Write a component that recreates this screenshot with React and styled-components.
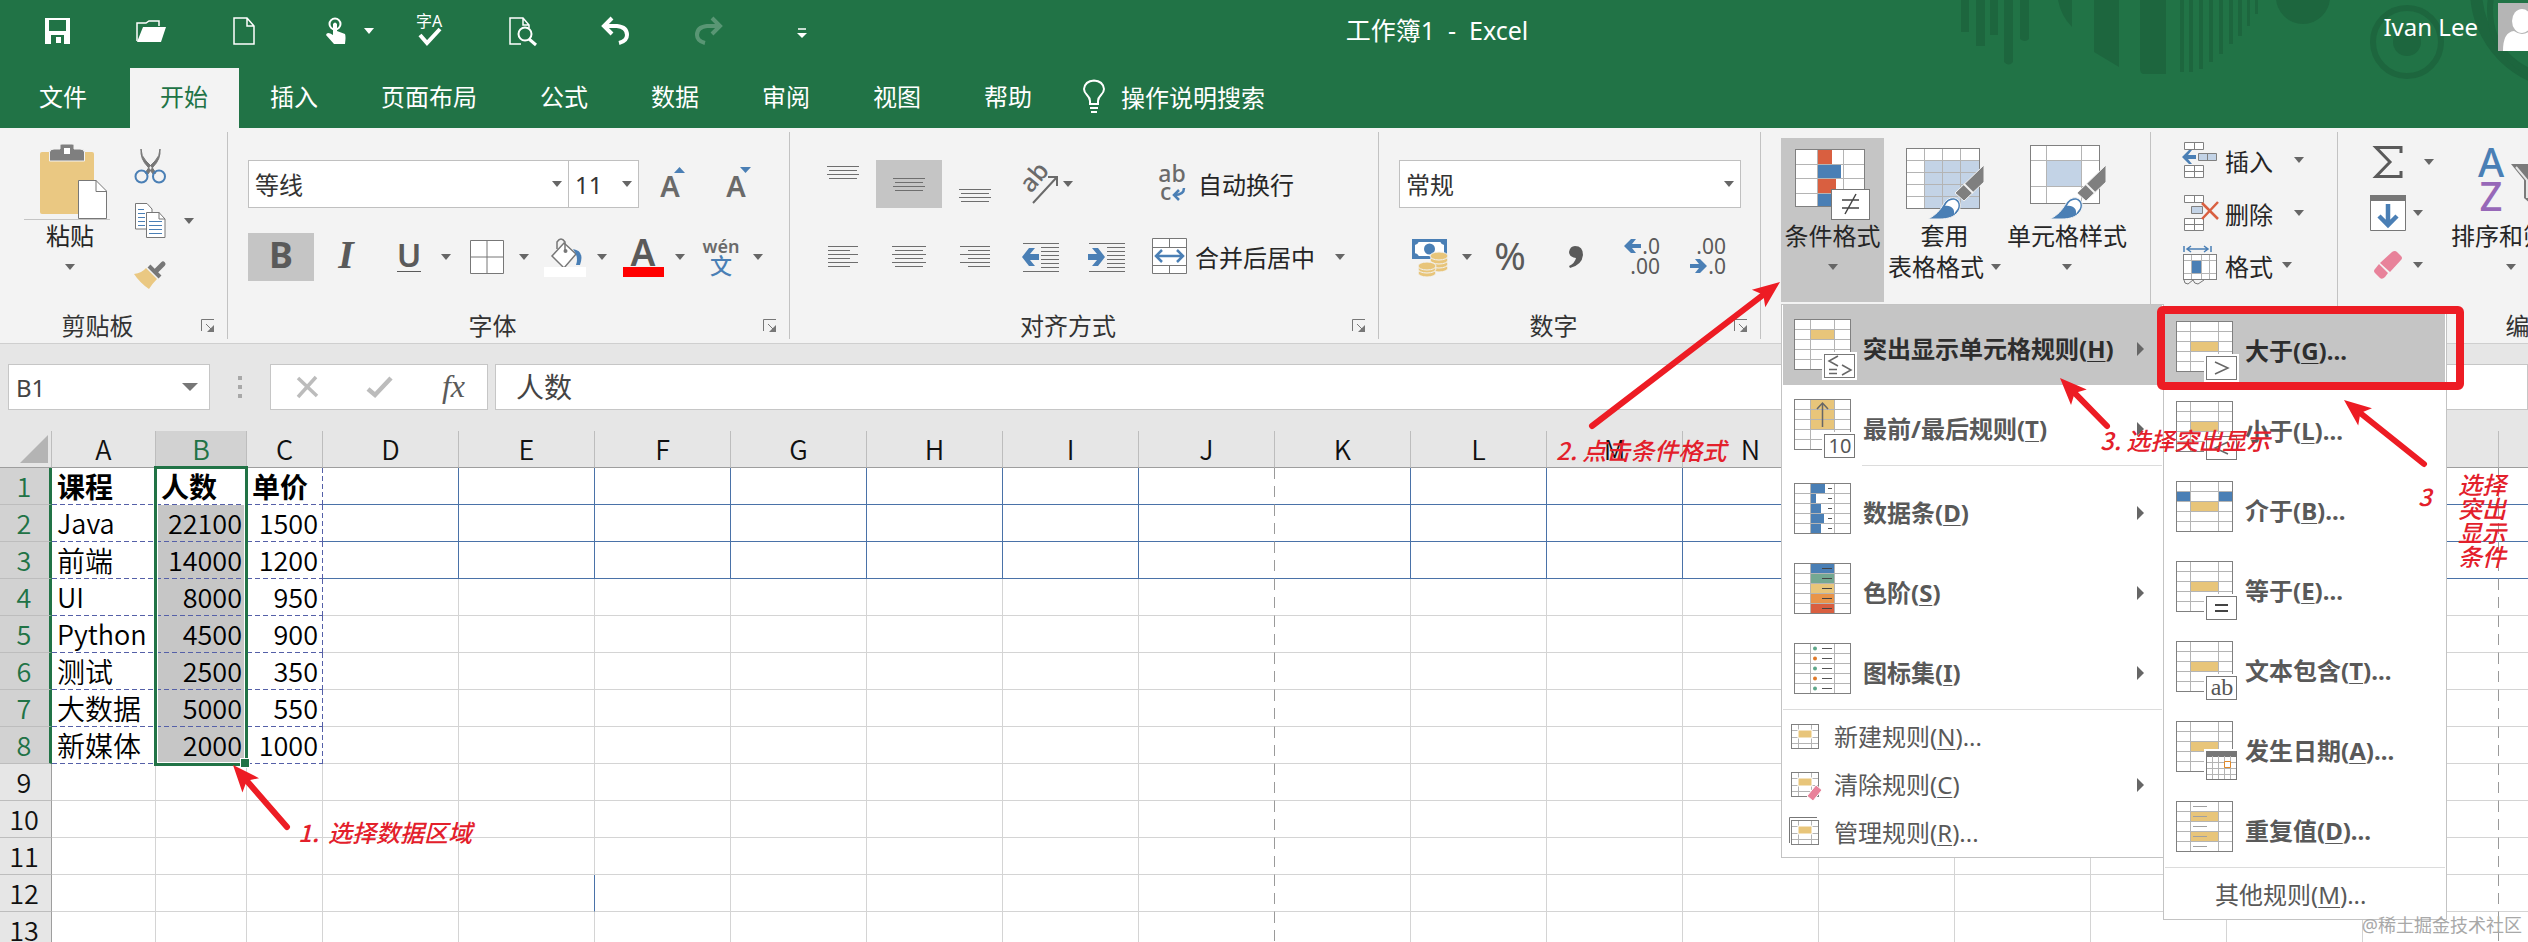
import React from "react";
import styled, { createGlobalStyle, css } from "styled-components";

const UI = `"Noto Sans", "Noto Sans CJK SC", sans-serif`;
const CELL = `"Noto Sans CJK SC", "Noto Sans", sans-serif`;
const GREEN = "#217346";
const RED = "#ed1c24";
const BLUE = "#4a7fb5";
const TAN = "#e8c57a";
const HOVER = "#c5c5c5";

const GlobalStyle = createGlobalStyle`
  * { box-sizing: border-box; }
  body { margin: 0; font-family: ${UI}; font-size: 24px; color: #333; background: #fff; }
  button, input, select { font: inherit; color: inherit; border: 0; background: none; padding: 0; margin: 0; outline: none; }
  svg { display: block; flex: none; overflow: visible; }
  ul { list-style: none; margin: 0; padding: 0; }
`;

const Page = styled.div`
  position: relative;
  height: 100vh;
  overflow: hidden;
  display: flex;
  flex-direction: column;
`;

/* ---------- title bar and tabs ---------- */
const Header = styled.header`
  position: relative;
  flex: none;
  background: ${GREEN};
  color: #fff;
`;
const Decor = styled.svg`
  position: absolute;
  top: 0;
  right: 0;
`;
const TitleRow = styled.div`
  position: relative;
  display: flex;
  align-items: center;
  height: 68px;
  padding-bottom: 6px;
`;
const QuickBar = styled.div`
  display: flex;
  padding-left: 11px;
`;
const QuickButton = styled.button`
  width: 93px;
  height: 48px;
  display: flex;
  align-items: center;
  justify-content: ${(p) => (p.$split ? "flex-start" : "center")};
  gap: 18px;
  padding-left: ${(p) => (p.$split ? "36px" : "0")};
  opacity: ${(p) => (p.$dim ? 0.25 : 1)};
`;
const Title = styled.h1`
  flex: 1;
  margin: 0;
  padding-bottom: 4px;
  text-align: center;
  font-size: 25px;
  font-weight: 400;
  white-space: pre;
`;
const Account = styled.div`
  width: 502px;
  height: 62px;
  display: flex;
  justify-content: flex-end;
  align-items: flex-start;
  gap: 20px;
  padding-top: 3px;
  line-height: 48px;
`;
const Avatar = styled.span`
  width: 30px;
  height: 48px;
  overflow: hidden;
  background: #b5b5b5;
`;
const Tabs = styled.nav`
  position: relative;
  display: flex;
  height: 60px;
`;
const Tab = styled.button`
  padding: ${(p) => (p.$file ? "0 43px 6px 39px" : p.$on ? "0 31px 6px 30px" : "0 32px 6px 31px")};
  background: ${(p) => (p.$on ? "#f3f3f3" : "transparent")};
  color: ${(p) => (p.$on ? GREEN : "#fff")};
  white-space: nowrap;
`;
const TellMe = styled.button`
  display: flex;
  align-items: center;
  gap: 16px;
  padding: 0 0 4px 19px;
  white-space: nowrap;
`;

/* ---------- ribbon ---------- */
const Ribbon = styled.div`
  flex: none;
  display: flex;
  height: 216px;
  padding: 4px 0;
  background: #f3f3f3;
  border-bottom: 1px solid #cfcfcf;
`;
const GroupBox = styled.section`
  flex: none;
  display: flex;
  flex-direction: column;
  justify-content: space-between;
  width: ${(p) => p.$w}px;
  border-right: 1px solid #c2c2c2;
`;
const GroupFoot = styled.div`
  display: flex;
  align-items: center;
  height: 26px;
`;
const GroupName = styled.span`
  flex: 1;
  text-align: center;
  line-height: 26px;
`;
const Launcher = styled.button`
  width: 32px;
  height: 26px;
  display: flex;
  align-items: center;
  padding-left: 6px;
`;
const Tools = styled.div`
  display: flex;
  flex-direction: column;
  gap: 25px;
  padding: 28px 0 0 20px;
`;
const ToolRow = styled.div`
  display: flex;
  height: 48px;
`;
const Tool = styled.button`
  width: ${(p) => p.$w || 66}px;
  height: 48px;
  display: flex;
  align-items: center;
  justify-content: center;
  padding-left: ${(p) => (p.$split ? "4px" : "0")};
  padding-bottom: ${(p) => (p.$lift ? "4px" : "0")};
  background: ${(p) => (p.$on ? HOVER : "transparent")};
`;
const LabelTool = styled.button`
  height: 48px;
  display: flex;
  align-items: center;
  gap: 8px;
  margin-left: ${(p) => p.$before}px;
  padding-bottom: 2px;
  white-space: nowrap;
  color: #262626;
`;
const ToolIcon = styled.span`
  width: ${(p) => p.$w || 36}px;
  display: flex;
  justify-content: center;
`;
const ArrowBox = styled.button`
  width: 20px;
  min-height: 24px;
  display: flex;
  align-items: center;
  justify-content: center;
  margin-left: ${(p) => p.$before || 0}px;
`;
const Glyph = styled.span`
  font-family: ${(p) => (p.$serif ? `"Liberation Serif", serif` : UI)};
  font-size: ${(p) => p.$size}px;
  font-weight: ${(p) => p.$weight || 400};
  font-style: ${(p) => (p.$italic ? "italic" : "normal")};
  line-height: 32px;
  color: #5a5a5a;
  border-bottom: ${(p) => (p.$under ? "1px solid #5a5a5a" : "0")};
`;
const ComboBox = styled.label`
  position: relative;
  display: flex;
  align-items: center;
  width: ${(p) => p.$w}px;
  height: 48px;
  margin-right: ${(p) => (p.$joined ? "-1px" : "0")};
  padding-right: 6px;
  background: #fff;
  border: 1px solid #c0c0c0;
  select {
    appearance: none;
    flex: 1;
    min-width: 0;
    height: 46px;
    padding-left: 6px;
  }
`;
const Columns = styled.div`
  display: flex;
  padding: 6px 0 0 ${(p) => p.$left}px;
`;
const BigButton = styled.button`
  width: ${(p) => p.$w}px;
  height: 164px;
  display: flex;
  flex-direction: column;
  align-items: center;
  padding-top: 6px;
  background: ${(p) => (p.$on ? HOVER : "transparent")};
  color: #262626;
  white-space: nowrap;
`;
const BigArt = styled.span`
  height: 76px;
  display: flex;
  align-items: flex-end;
`;
const BigLine = styled.span`
  height: 31px;
  line-height: 31px;
  display: flex;
  align-items: center;
  gap: 7px;
`;
const Stack = styled.div`
  display: flex;
  flex-direction: column;
  padding-left: ${(p) => p.$left || 0}px;
`;
const StackRow = styled.div`
  display: flex;
  align-items: center;
  height: ${(p) => p.$h}px;
`;
const StackButton = styled.button`
  display: flex;
  align-items: center;
  gap: 4px;
  color: #262626;
  white-space: nowrap;
`;
const MenuAnchor = styled.div`
  position: relative;
`;

/* ---------- drop-down menus ---------- */
const Menu = styled.ul`
  position: absolute;
  z-index: 5;
  top: ${(p) => (p.$sub ? 168 : 166)}px;
  left: ${(p) => (p.$sub ? 382 : 0)}px;
  width: ${(p) => (p.$sub ? 284 : 383)}px;
  padding: 0 1px;
  background: #fff;
  border: 1px solid #c3c3c3;
`;
const MenuItem = styled.button`
  width: 100%;
  height: ${(p) => (p.$small ? 48 : 80)}px;
  display: flex;
  align-items: center;
  gap: ${(p) => (p.$small ? 15 : 7)}px;
  padding: ${(p) => (p.$plain ? "0 18px 0 50px" : p.$small ? "0 18px 0 8px" : "8px 18px 0 11px")};
  background: ${(p) => (p.$on ? HOVER : "#fff")};
  color: ${(p) => (p.$on ? "#2e2e2e" : "#595959")};
  font-weight: ${(p) => (p.$small ? 400 : 700)};
  text-align: left;
  white-space: nowrap;
  u { text-underline-offset: 3px; text-decoration-thickness: 1px; }
`;
const ItemText = styled.span`
  flex: 1;
  padding-bottom: 4px;
`;
const MenuRule = styled.li`
  height: 4px;
  margin-left: ${(p) => p.$left || 0}px;
  border-top: 1px solid #dcdcdc;
`;

/* ---------- formula bar ---------- */
const FormulaBar = styled.div`
  flex: none;
  display: flex;
  height: 87px;
  padding: 20px 0 21px 8px;
  background: #e6e6e6;
`;
const White = css`
  height: 46px;
  background: #fff;
  border: 1px solid #c6c6c6;
  display: flex;
  align-items: center;
`;
const NameBox = styled.label`
  ${White}
  width: 202px;
  padding: 0 11px 0 7px;
  input { flex: 1; min-width: 0; height: 40px; font-size: 24px; color: #444; }
`;
const Dots = styled.span`
  width: 60px;
  height: 46px;
  display: flex;
  align-items: center;
  justify-content: center;
`;
const FormulaTools = styled.div`
  ${White}
  width: 218px;
  justify-content: space-between;
  padding: 0 22px 0 25px;
`;
const FormulaInput = styled.input`
  && {
    ${White}
    flex: 1;
    min-width: 0;
    margin-left: 7px;
    padding: 0 0 2px 20px;
    font-size: 28px;
    color: #444;
  }
`;

/* ---------- sheet ---------- */
const SheetWrap = styled.main`
  position: relative;
  flex: 1;
  min-height: 0;
  overflow: hidden;
`;
const Sheet = styled.table`
  table-layout: fixed;
  border-collapse: separate;
  border-spacing: 0;
  width: 2635px;
  font-family: ${CELL};
  font-weight: 350;
  color: #000;
`;
const ColHead = styled.th`
  height: 37px;
  padding: 0;
  font-size: 27px;
  line-height: 30px;
  font-weight: 350;
  color: ${(p) => (p.$on ? GREEN : "#111")};
  background: ${(p) => (p.$on ? "#d2d2d2" : "#e6e6e6")};
  border-bottom: 1px solid #9e9e9e;
  border-right: 1px solid #bdbdbd;
`;
const RowHead = styled.th`
  height: 37px;
  padding: 0 ${(p) => (p.$on ? 1 : 3)}px 0 0;
  font-size: 27px;
  line-height: 30px;
  font-weight: 350;
  color: ${(p) => (p.$on ? GREEN : "#111")};
  background: ${(p) => (p.$on ? "#d2d2d2" : "#e6e6e6")};
  border-bottom: 1px solid #bdbdbd;
  border-right: ${(p) => (p.$on ? `3px solid ${GREEN}` : "1px solid #9e9e9e")};
`;
const Corner = styled.div`
  display: flex;
  justify-content: flex-end;
  padding-right: 3px;
`;
const dashH = "repeating-linear-gradient(to right, #5560a8 0 5px, transparent 5px 8px)";
const dashV = "repeating-linear-gradient(to bottom, #5560a8 0 5px, transparent 5px 8px)";
const pageV = "repeating-linear-gradient(to bottom, #9a9a9a 0 11px, transparent 11px 18px)";
const Cell = styled.td`
  height: 37px;
  padding: 0 4px 0 5px;
  white-space: nowrap;
  line-height: 36px;
  font-size: ${(p) => (p.$latin ? 27 : 28)}px;
  font-weight: ${(p) => (p.$bold ? 700 : 350)};
  text-align: ${(p) => (p.$num ? "right" : "left")};
  background-color: ${(p) => (p.$sel ? "#c6c6c6" : "transparent")};
  border-right: 1px solid ${(p) => p.$right};
  border-bottom: 1px solid ${(p) => p.$bottom};
  background-origin: border-box;
  background-repeat: no-repeat;
  background-image: ${(p) => [p.$dash && dashH, p.$dashRight && dashV, p.$page && pageV].filter(Boolean).join(",") || "none"};
  background-position: ${(p) => (p.$dash ? "left bottom, right top" : "right top")};
  background-size: ${(p) => (p.$dash ? "100% 1px, 1px 100%" : "1px 100%")};
`;
const Selection = styled.div`
  position: absolute;
  left: 154px;
  top: 35px;
  width: 94px;
  height: 300px;
  border: 3px solid ${GREEN};
  box-shadow: inset 0 0 0 1px #fff;
  pointer-events: none;
  &::after {
    content: "";
    position: absolute;
    right: -4px;
    bottom: -4px;
    width: 8px;
    height: 8px;
    background: ${GREEN};
    outline: 1px solid #fff;
  }
`;

/* ---------- tutorial marks lying over the page ---------- */
const Marks = styled.svg`
  position: absolute;
  z-index: 8;
  top: 0;
  left: 0;
  pointer-events: none;
`;
const Note = styled.p`
  position: absolute;
  z-index: 9;
  left: ${(p) => p.$x}px;
  top: ${(p) => p.$y}px;
  margin: 0;
  font-family: ${CELL};
  font-size: 24px;
  line-height: 24px;
  font-style: italic;
  font-weight: 500;
  color: #e3202b;
  white-space: pre;
`;
const Watermark = styled.footer`
  position: absolute;
  z-index: 9;
  right: 6px;
  bottom: 5px;
  font-size: 18px;
  line-height: 24px;
  color: #a8a8a8;
`;

/* ---------- small drawings ---------- */
const Tri = ({ w = 10, h = 6, c = "#666" }) => (
  <svg width={w} height={h}><path d={`M0 0H${w}L${w / 2} ${h}Z`} fill={c} /></svg>
);
const Arrow = ({ before, label = "更多" }) => (
  <ArrowBox $before={before} aria-label={label}><Tri /></ArrowBox>
);
const Lines = ({ rows, w = 34, h = 26 }) => (
  <svg width={w} height={h} stroke="#6e6e6e" strokeWidth="1">
    {rows.map(([x1, x2, y]) => <path key={y} d={`M${x1} ${y + 0.5}H${x2}`} />)}
  </svg>
);
const three = (y) => [[1, 33, y], [3, 31, y + 4], [1, 33, y + 8], [3, 31, y + 12]];
const LeftArrow = ({ flip, x = 0, y = 0 }) => (
  <path transform={flip ? `translate(${x + 17} ${y}) scale(-1 1)` : `translate(${x} ${y})`}
    d="M0 9L7 0H13L8 6H17V12H8L13 18H7Z" fill={BLUE} />
);
const Indent = ({ flip }) => (
  <svg width="38" height="28">
    <path d="M1 .5H37M19 4.500H37M19 8.500H37M19 12.500H37M19 16.500H37M19 20.500H37M19 24.500H37M1 28.500H37" stroke="#6e6e6e" />
    <LeftArrow flip={flip} x={0} y={5} />
  </svg>
);
const Brush = ({ x, y }) => (
  <g transform={`translate(${x} ${y})`}>
    <path d="M56 0V17L36 36L27 28Z" fill="#7f7f7f" stroke="#f3f3f3" strokeWidth="1" />
    <path d="M36 19L45 28" stroke="#f3f3f3" strokeWidth="2" />
    <path d="M0 54C8 50 12 45 15 40C18 34 23 32 27 33C33 35 34 42 30 47C26 52 20 54 12 54Z" fill={BLUE} stroke="#f3f3f3" strokeWidth="1" />
    <path d="M17 41C19 36 23 34 27 35C31 37 32 42 28 46L26 49C27 44 23 40 17 41Z" fill="#fff" />
  </g>
);
const Grid = ({ w, h, xs, ys, fills = [], stroke = "#808080", inner = "#b4b4b4" }) => (
  <g>
    <rect x="0.500" y="0.500" width={w - 1} height={h - 1} fill="#fff" />
    {fills.map(([x, y, a, b, c], i) => <rect key={i} x={x} y={y} width={a} height={b} fill={c} />)}
    <path d={xs.map((x) => `M${x} 1V${h - 1}`).join("") + ys.map((y) => `M1 ${y}H${w - 1}`).join("")} stroke={inner} strokeWidth="1" fill="none" />
    <rect x="0.500" y="0.500" width={w - 1} height={h - 1} fill="none" stroke={stroke} strokeWidth="1" />
  </g>
);
const RuleIcon = ({ fills = [], xs = [16.5, 40.5], over, badge }) => (
  <svg width="62" height="60">
    <Grid w={57} h={51} xs={xs} ys={[10.5, 20.5, 30.5, 40.5]} fills={fills} />
    {over}
    {badge && (
      <g>
        <rect x="28" y="33" width="35" height="28" fill="#fff" />
        <rect x="30.500" y="35.500" width="30" height="23" fill="#fff" stroke="#777" strokeWidth="1" />
        {badge}
      </g>
    )}
  </svg>
);
const badgeText = (t, serif) => (
  <text x="46" y="54" textAnchor="middle" fontSize={serif ? 24 : 20} fontWeight="400" fill="#555"
    fontFamily={serif ? "Liberation Serif, serif" : UI}>{t}</text>
);
const mark = (d) => <path d={d} fill="none" stroke="#666" strokeWidth="1.500" />;
const Eraser = () => (
  <svg width="30" height="28">
    <path d="M19 1Q22 -1 24 1L28 5Q30 7 28 9L17 21L7 12Z" fill="#e8829a" />
    <path d="M6 13L15 22L12 26Q9 29 7 27L2 22Q0 20 2 18Z" fill="#e8829a" />
  </svg>
);
const SmallRule = ({ kind }) => (
  <svg width="28" height="28">
    {kind === "manage" && <path d="M-1.500 24V-1.500H26" fill="none" stroke="#777" strokeWidth="1" />}
    <g transform="translate(0 1)"><Grid w={28} h={25} xs={[7.5, 20.5]} ys={[6.5, 13.5, 19.5]} />
      <rect x="7" y="6" width="14" height="8" fill={TAN} stroke="#fff" strokeWidth="1" /></g>
    {kind === "clear" && <g transform="translate(14 14)"><path d="M11 0L17 5L8 16L2 11Z" fill="#e8829a" stroke="#fff" strokeWidth="1" /></g>}
  </svg>
);
const LaunchIcon = () => (
  <svg width="14" height="14" fill="none" stroke="#777"><path d="M.5 12V.5H13M5 5L11 11" /><path d="M13 6V13H6Z" fill="#777" stroke="none" /></svg>
);
const Pic = ({ w, h, children }) => <svg width={w} height={h} fill="none">{children}</svg>;

const Group = ({ w, name, launcher = true, children }) => (
  <GroupBox $w={w} aria-label={name}>
    {children}
    <GroupFoot>
      <GroupName>{name}</GroupName>
      {launcher && <Launcher aria-label={`${name}设置`}><LaunchIcon /></Launcher>}
    </GroupFoot>
  </GroupBox>
);
const Combo = ({ w, value, label, joined }) => (
  <ComboBox $w={w} $joined={joined}>
    <select aria-label={label} defaultValue={value}><option>{value}</option></select>
    <Tri />
  </ComboBox>
);
const Split = ({ label, lift, children }) => (
  <>
    <Tool $w={58} $split $lift={lift} aria-label={label}>{children}</Tool>
    <Arrow label={`${label}选项`} />
  </>
);

/* ---------- sections ---------- */
const DecorArt = () => (
  <Decor width="568" height="128" fill="#1d663e">
    <path d="M1 0h8V32h-8zM16 0h9V46h-9zM30 0h8V35h-8zM44 0h9V62q-4 5 -9 0zM60 0h9V39q-4 4 -9 0z" />
    <path d="M98 0h14V27Q101 16 98 0zM134 0h25V67L134 52zM180 0h26V74h-22q-4 0 -4 -6z" />
    <path d="M220 0h4V72h-4zM229 0h4V72h-4zM239 0h4V69h-4zM249 0h4V62h-4zM259 0h4V54h-4zM269 0h4V44h-4zM278 0h4V36h-4zM287 0h3V26h-3zM295 0h3V14h-3z" />
    <circle cx="343" cy="-3" r="27" />
    <circle cx="447" cy="42" r="34" fill="none" stroke="#1d663e" strokeWidth="6" />
    <circle cx="447" cy="42" r="14" />
    <circle cx="610" cy="-10" r="94" fill="none" stroke="#1d663e" strokeWidth="12" />
    <circle cx="600" cy="10" r="70" fill="none" stroke="#1d663e" strokeWidth="6" />
  </Decor>
);

const TopBar = () => (
  <Header>
    <DecorArt />
    <TitleRow>
      <QuickBar>
        <QuickButton aria-label="保存"><Pic w={25} h={26}><path d="M0 0H25V26H0Z" fill="#fff" /><path d="M4 2H21V13H4ZM6 17H19V26H6Z" fill={GREEN} /><path d="M11 19H16V25H11Z" fill="#fff" /><path d="M8 19h3v6h-3z" fill={GREEN} /></Pic></QuickButton>
        <QuickButton aria-label="打开"><Pic w={30} h={22}><path d="M1 21V3H10L13 1H23V6" stroke="#fff" strokeWidth="1.5" /><path d="M7 7H30L25 22H1Z" fill="#fff" /></Pic></QuickButton>
        <QuickButton aria-label="新建"><Pic w={22} h={28}><path d="M1 1H14L21 9V27H1ZM14 1V9H21" stroke="#fff" strokeWidth="1.5" /></Pic></QuickButton>
        <QuickButton $split aria-label="触摸模式"><Pic w={20} h={27}><circle cx="9" cy="6" r="5.5" stroke="#fff" strokeWidth="2" /><path d="M7 6Q9 3 11 6V13L19 16Q20 18 19 26H8L0 17Q1 13 7 17Z" fill="#fff" /></Pic><Tri c="#fff" /></QuickButton>
        <QuickButton aria-label="拼写检查">
          <svg width="28" height="32"><text x="0" y="12" fontSize="16" fontFamily={UI} fill="#fff">字A</text><path d="M4 20L11 28L24 14" fill="none" stroke="#fff" strokeWidth="4" /></svg>
        </QuickButton>
        <QuickButton aria-label="打印预览"><Pic w={28} h={28}><path d="M12 27H1V1H14L20 8V11M14 1V8H20" stroke="#fff" strokeWidth="1.5" /><circle cx="16" cy="17" r="6.5" stroke="#fff" strokeWidth="2" /><path d="M20 22L27 28" stroke="#fff" strokeWidth="3" /></Pic></QuickButton>
        <QuickButton aria-label="撤消"><Pic w={27} h={27}><path d="M2 8H15Q25 9 25 17Q25 23 17 25" stroke="#fff" strokeWidth="4" /><path d="M10 0L2 8L10 16" stroke="#fff" strokeWidth="4" /></Pic></QuickButton>
        <QuickButton $dim aria-label="恢复"><Pic w={27} h={27}><path d="M25 8H12Q2 9 2 17Q2 23 10 25" stroke="#fff" strokeWidth="4" /><path d="M17 0L25 8L17 16" stroke="#fff" strokeWidth="4" /></Pic></QuickButton>
        <QuickButton aria-label="自定义"><Pic w={10} h={4}><path d="M1 0H9" stroke="#fff" strokeWidth="1.5" /><path d="M0 4H10L5 9Z" fill="#fff" /></Pic></QuickButton>
      </QuickBar>
      <Title>工作簿1  -  Excel</Title>
      <Account>
        <span>Ivan Lee</span>
        <Avatar><Pic w={48} h={48}><ellipse cx="24" cy="18" rx="10" ry="12" fill="#fff" /><path d="M5 48Q5 29 16 28Q24 34 32 28Q43 29 43 48Z" fill="#fff" /></Pic></Avatar>
      </Account>
    </TitleRow>
    <Tabs>
      <Tab $file>文件</Tab>
      <Tab $on>开始</Tab>
      {["插入", "页面布局", "公式", "数据", "审阅", "视图", "帮助"].map((t) => <Tab key={t}>{t}</Tab>)}
      <TellMe>
        <Pic w={22} h={34}><path d="M7 25V22Q7 19 4 16Q1 13 1 10Q2 2 11 1.5Q20 2 21 10Q21 13 18 16Q15 19 15 22V25ZM7 29H15M8 33H14" stroke="#fff" strokeWidth="2" /></Pic>
        操作说明搜索
      </TellMe>
    </Tabs>
  </Header>
);

const Clipboard = () => (
  <Group w={228} name="剪贴板">
    <Columns $left={22}>
      <BigButton $w={96}>
        <BigArt>
          <Pic w={60} h={76}>
            <rect x="0" y="8" width="54" height="62" rx="2" fill="#eac882" />
            <path d="M9.500 17V8Q10 5 14 5H20V1Q20 0 22 0H32Q34 0 34 1V5H40Q44 5 44.500 8V17Z" fill="#7f7f7f" stroke="#f3f3f3" />
            <rect x="24" y="4" width="6" height="6" fill="#fff" />
            <path d="M38.500 36.500H56L66.500 47V74.500H38.500Z" fill="#fff" stroke="#777" /><path d="M56 36V47.500H67" stroke="#777" />
            <path d="M-16 75.500H70" stroke="#c4c4c4" />
          </Pic>
        </BigArt>
        <BigLine>粘贴</BigLine>
        <BigLine><Tri /></BigLine>
      </BigButton>
      <Stack $left={12}>
        <StackRow $h={55}><StackButton aria-label="剪切"><ToolIcon $w={40}><Pic w={32} h={36}><path d="M7 1Q7 8 12 13L17 18L22 25L19 26L14 19Q6 11 7 1ZM26 1Q26 8 21 13L16 18L11 25L14 26L19 19Q27 11 26 1Z" fill="#777" stroke="#777" /><circle cx="7.500" cy="28.500" r="6" stroke={BLUE} strokeWidth="2" /><circle cx="25" cy="28.500" r="6" stroke={BLUE} strokeWidth="2" /></Pic></ToolIcon></StackButton></StackRow>
        <StackRow $h={55}><StackButton aria-label="复制"><ToolIcon $w={40}><Pic w={32} h={36}><path d="M1.500 .5H13L18 6V26H1.500Z" fill="#fff" stroke="#777" /><path d="M4 6.500H10M4 10.500H11M4 14.500H11M4 18.500H11M4 22.500H11" stroke={BLUE} /><path d="M12.500 9.500H25L31 16V34.500H12.500Z" fill="#fff" stroke="#777" /><path d="M15 18.500H28M15 22.500H28M15 26.500H28M15 30.500H28" stroke={BLUE} /><path d="M25 9V16H31" stroke="#777" /></Pic></ToolIcon></StackButton><Arrow before={9} label="复制选项" /></StackRow>
        <StackRow $h={55}><StackButton aria-label="格式刷"><ToolIcon $w={40}><Pic w={32} h={28}><path d="M0 12Q8 11 12 6L23 17Q18 22 15 27Q6 21 0 12Z" fill="#eac882" /><path d="M15 4L26 15" stroke="#777" strokeWidth="4" /><path d="M22 9L29 2" stroke="#777" strokeWidth="5" strokeLinecap="round" /></Pic></ToolIcon></StackButton></StackRow>
      </Stack>
    </Columns>
  </Group>
);

const FontGroup = () => (
  <Group w={562} name="字体">
    <Tools>
      <ToolRow>
        <Combo w={321} value="等线" label="字体" joined />
        <Combo w={71} value="11" label="字号" />
        {[0, 1].map((i) => (
          <Tool key={i} aria-label={i ? "减小字号" : "增大字号"}>
            <svg width="26" height="36"><text x="11" y="31" textAnchor="middle" fontSize="29" fontFamily={UI} fontWeight="600" fill="#6a6a6a">A</text><path d={i ? "M15 1H26L20.500 7Z" : "M15 7H26L20.500 1Z"} fill={BLUE} /></svg>
          </Tool>
        ))}
      </ToolRow>
      <ToolRow>
        <Tool $on $lift aria-label="加粗"><Glyph $size={36} $weight={700}>B</Glyph></Tool>
        <Tool $w={64} $lift aria-label="倾斜"><Glyph $size={40} $serif $italic $weight={700}>I</Glyph></Tool>
        <Split label="下划线" lift><Glyph $size={33} $weight={600} $under>U</Glyph></Split>
        <Split label="边框"><Pic w={34} h={34}><path d="M.5 .5H33.500V33.500H.5Z" fill="#fff" stroke="#777" /><path d="M17 1V33M1 17H33" stroke="#777" /></Pic></Split>
        <Split label="填充颜色"><Pic w={42} h={40}><path d="M20 6L32 17L20 31L8 19Z" fill="#fff" stroke="#777" strokeWidth="1.5" /><path d="M13 12V5Q17 -1 21 5V14" stroke="#777" strokeWidth="1.5" /><circle cx="21.500" cy="14" r="2" fill="#777" /><path d="M29 12Q41 14 36 28H32Q35 20 29 12Z" fill={BLUE} /><path d="M0 30H42V40H0Z" fill="#fff" /></Pic></Split>
        <Split label="字体颜色"><svg width="41" height="40"><text x="20" y="29" textAnchor="middle" fontSize="37" fontWeight="600" fontFamily={UI} fill="#5a5a5a">A</text><path d="M0 30H41V40H0Z" fill="#f00" /></svg></Split>
        <Split label="拼音指南"><svg width="36" height="40"><text x="18" y="16" textAnchor="middle" fontSize="18" fontWeight="600" fontFamily={UI} fill="#6a6a6a">wén</text><text x="18" y="37" textAnchor="middle" fontSize="22" fontWeight="500" fontFamily={UI} fill={BLUE}>文</text></svg></Split>
      </ToolRow>
    </Tools>
  </Group>
);

const AlignGroup = () => (
  <Group w={589} name="对齐方式">
    <Tools>
      <ToolRow>
        <Tool aria-label="顶端对齐"><Lines h={42} rows={three(3)} /></Tool>
        <Tool $on aria-label="垂直居中"><Lines h={42} rows={three(15)} /></Tool>
        <Tool aria-label="底端对齐"><Lines h={42} rows={three(26)} /></Tool>
        <Tool $w={56} $split aria-label="方向">
          <svg width="38" height="36"><text transform="translate(12 28) rotate(-50)" fontSize="25" fontWeight="500" fontFamily={UI} fill="#6a6a6a">ab</text><path d="M14 37L38 11M29 11H38V20" fill="none" stroke="#6a6a6a" strokeWidth="2" /></svg>
        </Tool>
        <Arrow before={-6} label="方向选项" />
        <LabelTool $before={76}>
          <ToolIcon><svg width="26" height="36"><text x="13" y="17" textAnchor="middle" fontSize="23" fontWeight="500" fontFamily={UI} fill="#6a6a6a">ab</text><text x="1" y="35" fontSize="23" fontWeight="500" fontFamily={UI} fill="#6a6a6a">c</text><path d="M25 23Q25 30 15 30M20 25L15 30L20 35" fill="none" stroke={BLUE} strokeWidth="2.500" /></svg></ToolIcon>
          自动换行
        </LabelTool>
      </ToolRow>
      <ToolRow>
        <Tool aria-label="左对齐"><Lines rows={[[2, 32, 2], [2, 24, 6], [2, 32, 10], [2, 24, 14], [2, 32, 18], [2, 24, 22]]} /></Tool>
        <Tool aria-label="居中"><Lines rows={[[0, 34, 2], [3, 31, 6], [0, 34, 10], [3, 31, 14], [0, 34, 18], [3, 31, 22]]} /></Tool>
        <Tool aria-label="右对齐"><Lines rows={[[2, 32, 2], [10, 32, 6], [2, 32, 10], [10, 32, 14], [2, 32, 18], [10, 32, 22]]} /></Tool>
        <Tool aria-label="减少缩进量"><Indent /></Tool>
        <Tool aria-label="增加缩进量"><Indent flip /></Tool>
        <LabelTool $before={11}>
          <ToolIcon><Pic w={35} h={36}><path d="M.5 .5H34.500V35.500H.5ZM1 9.500H34M1 27.500H34M17.500 1V9M17.500 27V35" fill="#fff" stroke="#777" /><path d="M4 18H31M10 12L4 18L10 24M25 12L31 18L25 24" stroke={BLUE} strokeWidth="2.500" /></Pic></ToolIcon>
          合并后居中
        </LabelTool>
        <Arrow before={15} label="合并选项" />
      </ToolRow>
    </Tools>
  </Group>
);

const decimals = (a, b, left) => (
  <svg width="36" height="40"><text x="36" y="17" textAnchor="end" fontSize="21" fontFamily={UI} fill="#5a5a5a">{a}</text><text x="36" y="37" textAnchor="end" fontSize="21" fontFamily={UI} fill="#5a5a5a">{b}</text>
    <path transform={left ? "translate(0 2)" : "translate(17 22) scale(-1 1)"} d="M0 7L7 0H12L8 5H17V9H8L12 14H7Z" fill={BLUE} /></svg>
);
const NumberGroup = () => (
  <Group w={382} name="数字">
    <Tools>
      <ToolRow><Combo w={342} value="常规" label="数字格式" /></ToolRow>
      <ToolRow>
        <Split label="会计数字格式">
          <Pic w={36} h={38}>
            <rect x="1.500" y="2.500" width="32" height="17" fill="#fff" stroke={BLUE} strokeWidth="3" /><circle cx="17.500" cy="11" r="5.500" fill={BLUE} />
            <path d="M1 2h6q0 5 -6 5zM34 2h-6q0 5 6 5zM1 20h6q0 -5 -6 -5z" fill={BLUE} />
            <g fill={TAN} stroke="#f3f3f3" strokeWidth="1">
              {[30, 26, 22, 18].map((y) => <ellipse key={y} cx="27" cy={y} rx="9" ry="4" />)}
              {[35, 31, 28].map((y) => <ellipse key={y} cx="15" cy={y} rx="9" ry="4" />)}
            </g>
          </Pic>
        </Split>
        <Tool $lift aria-label="百分比样式"><Glyph $size={38}>%</Glyph></Tool>
        <Tool aria-label="千位分隔样式"><Pic w={18} h={24}><path d="M8 1Q16 1 16 10Q15 20 3 23L2 21Q8 18 9 13Q2 12 2 7Q3 1 8 1Z" fill="#5a5a5a" /></Pic></Tool>
        <Tool aria-label="增加小数位数">{decimals(".0", ".00", true)}</Tool>
        <Tool aria-label="减少小数位数">{decimals(".00", ".0", false)}</Tool>
      </ToolRow>
    </Tools>
  </Group>
);

const ruleItems = [
  { t: "突出显示单元格规则", k: "H", on: true, icon: <RuleIcon fills={[[16, 10, 25, 11, TAN]]} badge={mark("M44 37L35 42L44 47M35 50.500H43M35 54.500H43M48 46L57 51L48 56")} /> },
  { t: "最前/最后规则", k: "T", icon: <RuleIcon fills={[[16, 1, 25, 30, TAN]]} over={<path d="M28.500 28V5M23 10L28.500 4L34 10" fill="none" stroke="#666" strokeWidth="1.500" />} badge={badgeText("10")} />, ruleAfter: 79 },
  { t: "数据条", k: "D", icon: <RuleIcon fills={[[16, 1, 15, 10, BLUE], [16, 11, 6, 10, BLUE], [16, 21, 11, 10, BLUE], [16, 31, 14, 10, BLUE], [16, 41, 11, 9, BLUE]]} over={<path d="M34 5.500h4M34 15.500h4M34 25.500h4M34 35.500h4M34 45.500h4" stroke="#555" />} /> },
  { t: "色阶", k: "S", icon: <RuleIcon fills={[[16, 1, 25, 10, BLUE], [16, 11, 25, 10, "#74a892"], [16, 21, 25, 10, TAN], [16, 31, 25, 10, "#e8944a"], [16, 41, 25, 9, "#d95f40"]]} over={<path d="M28 5.500h10M28 15.500h10M28 25.500h10M28 35.500h10M28 45.500h10" stroke="#444" />} /> },
  { t: "图标集", k: "I", icon: <RuleIcon over={<g><path d="M28 5.500h10M28 15.500h10M28 25.500h10M28 35.500h10M28 45.500h10" stroke="#555" />{[5.5, 15.5, 25.5, 35.5, 45.5].map((y, i) => <circle key={y} cx="21" cy={y} r="2" fill={i % 2 ? "#e07a2a" : "#5fa88a"} />)}</g>} /> },
];
const mid = [[15, 20, 28, 10, TAN]];
const XS = [14.5, 42.5];
const subItems = [
  { t: "大于", k: "G", on: true, icon: <RuleIcon xs={XS} fills={mid} badge={mark("M39 41L52 47L39 53")} /> },
  { t: "小于", k: "L", icon: <RuleIcon xs={XS} fills={mid} badge={mark("M52 41L39 47L52 53")} /> },
  { t: "介于", k: "B", icon: <RuleIcon xs={XS} fills={[...mid, [1, 11, 14, 9, BLUE], [43, 11, 13, 9, BLUE]]} /> },
  { t: "等于", k: "E", icon: <RuleIcon xs={XS} fills={mid} badge={<path d="M39 44H52M39 50H52" stroke="#444" strokeWidth="2" />} /> },
  { t: "文本包含", k: "T", icon: <RuleIcon xs={XS} fills={mid} badge={badgeText("ab", true)} /> },
  { t: "发生日期", k: "A", icon: <RuleIcon xs={XS} fills={mid} badge={<g><path d="M28 28H63V32H28Z" fill="#fff" /><path d="M30 30H61V35H30Z" fill="#777" /><path d="M36.500 35V58M42.500 35V58M48.500 35V58M54.500 35V58M31 41.500H60M31 47.500H60M31 53.500H60" stroke="#b4b4b4" /><path d="M48.500 40.500H54.500V46.500H48.500Z" fill="#fff" stroke="#e08a2a" /></g>} /> },
  { t: "重复值", k: "D", icon: <RuleIcon xs={XS} fills={[[15, 11, 28, 9, TAN], [15, 31, 28, 9, TAN]]} over={<path d="M17 5.500h14M17 15.500h14M17 25.500h14M17 35.500h14M17 45.500h14" stroke="#a0a0a0" />} /> },
];
const Key = ({ k, dots }) => <>(<u>{k}</u>){dots && "..."}</>;
const SideTri = () => <svg width="7" height="14"><path d="M0 0L7 7L0 14Z" fill="#666" /></svg>;

const RuleMenus = () => (
  <>
    <Menu>
      {ruleItems.map((m) => (
        <React.Fragment key={m.k}>
          <li><MenuItem $on={m.on}>{m.icon}<ItemText>{m.t}<Key k={m.k} /></ItemText><SideTri /></MenuItem></li>
          {m.ruleAfter && <MenuRule $left={m.ruleAfter} />}
        </React.Fragment>
      ))}
      <MenuRule />
      <li><MenuItem $small><SmallRule kind="new" /><ItemText>新建规则<Key k="N" dots /></ItemText></MenuItem></li>
      <li><MenuItem $small><SmallRule kind="clear" /><ItemText>清除规则<Key k="C" /></ItemText><SideTri /></MenuItem></li>
      <li><MenuItem $small><SmallRule kind="manage" /><ItemText>管理规则<Key k="R" dots /></ItemText></MenuItem></li>
    </Menu>
    <Menu $sub>
      {subItems.map((m) => (
        <li key={m.k}><MenuItem $on={m.on}>{m.icon}<ItemText>{m.t}<Key k={m.k} dots /></ItemText></MenuItem></li>
      ))}
      <MenuRule />
      <li><MenuItem $small $plain><ItemText>其他规则<Key k="M" dots /></ItemText></MenuItem></li>
    </Menu>
  </>
);

const StylesGroup = () => (
  <Group w={390} name="样式" launcher={false}>
    <Columns $left={20}>
      <MenuAnchor>
        <BigButton $w={103} $on>
          <BigArt>
            <svg width="75" height="71">
              <Grid w={70} h={58} xs={[22.5, 48.5]} ys={[15.5, 29.5, 44.5]} fills={[[22, 1, 15, 15, "#d95f40"], [22, 16, 24, 14, BLUE], [22, 30, 19, 14, "#d95f40"], [22, 44, 16, 13, BLUE]]} />
              <rect x="36.500" y="40.500" width="38" height="30" fill="#fff" stroke="#777" />
              <path d="M47 51H64M47 59H64M61 45L50 65" stroke="#444" strokeWidth="1.500" />
            </svg>
          </BigArt>
          <BigLine>条件格式</BigLine>
          <BigLine><Tri /></BigLine>
        </BigButton>
        <RuleMenus />
      </MenuAnchor>
      <BigButton $w={121}>
        <BigArt>
          <svg width="77" height="72"><Grid w={74} h={61} xs={[18.5, 36.5, 54.5]} ys={[12.5, 24.5, 36.5, 48.5]} fills={[[18, 12, 55, 48, "#c3d3e6"]]} /><Brush x={22} y={17} /></svg>
        </BigArt>
        <BigLine>套用</BigLine>
        <BigLine>表格格式<Tri /></BigLine>
      </BigButton>
      <BigButton $w={124}>
        <BigArt>
          <svg width="75" height="75"><Grid w={70} h={59} xs={[16.5, 51.5]} ys={[15.5, 41.5]} fills={[[16, 15, 35, 26, "#c3d3e6"]]} /><Brush x={20} y={20} /></svg>
        </BigArt>
        <BigLine>单元格样式</BigLine>
        <BigLine><Tri /></BigLine>
      </BigButton>
    </Columns>
  </Group>
);

const cellBoxes = "M2.500 .5H21.500V7.500H2.500ZM12.500 1V8M2.500 23.500H21.500V35.500H2.500ZM3 29.500H22M12.500 23V35";
const CellsGroup = () => (
  <Group w={187} name="单元格" launcher={false}>
    <Stack $left={28}>
      <StackRow $h={56}>
        <StackButton><ToolIcon $w={42}><Pic w={36} h={36}><path d={cellBoxes} fill="#fff" stroke="#808080" /><path d="M16.500 11.500H34.500V18.500H16.500ZM25.500 12V19" fill="#c3d3e6" stroke="#808080" /><g transform="translate(0 8)"><path d="M0 7L7 0H10L6 5H14V9H6L10 14H7Z" fill={BLUE} /></g></Pic></ToolIcon>插入</StackButton>
        <Arrow before={16} label="插入选项" />
      </StackRow>
      <StackRow $h={50}>
        <StackButton><ToolIcon $w={42}><Pic w={36} h={36}><path d={cellBoxes} fill="#fff" stroke="#808080" /><path d="M9.500 11.500H20.500V18.500H9.500Z" fill="#c3d3e6" stroke="#808080" /><path d="M20 8L36 24M36 7L20 24" stroke="#d95f40" strokeWidth="2.500" /></Pic></ToolIcon>删除</StackButton>
        <Arrow before={16} label="删除选项" />
      </StackRow>
      <StackRow $h={54}>
        <StackButton><ToolIcon $w={42}><svg width="34" height="38"><path d="M1 0V6M28 0V6M4 3H25M8 0L4 3L8 6M21 0L25 3L21 6" fill="none" stroke={BLUE} strokeWidth="1.500" /><g transform="translate(0 8)"><Grid w={34} h={26} xs={[8.5, 18.5, 26.500]} ys={[6.5, 19.500]} fills={[[8, 6, 10, 13, BLUE]]} /></g><path d="M1 34Q1 38 5 38L10 34Q11 38 15 38L21 34" fill="none" stroke="#777" /></svg></ToolIcon>格式</StackButton>
        <Arrow before={4} label="格式选项" />
      </StackRow>
    </Stack>
  </Group>
);

const EditGroup = () => (
  <Group w={384} name="编辑" launcher={false}>
    <Columns $left={30}>
      <Stack>
        <StackRow $h={48}>
          <StackButton aria-label="自动求和"><ToolIcon $w={40}><Pic w={28} h={32}><path d="M27 7V1.500H2L16 16L2 30.500H27V25" stroke="#5a5a5a" strokeWidth="3" /></Pic></ToolIcon></StackButton><Arrow before={11} label="求和选项" />
        </StackRow>
        <StackRow $h={54}>
          <StackButton aria-label="填充"><ToolIcon $w={40}><Pic w={36} h={36}><path d="M.5 .5H35.500V35.500H.5Z" fill="#fff" stroke="#777" /><path d="M0 0H36V6H0Z" fill="#777" /><path d="M18 9V30M9 21L18 30L27 21" stroke={BLUE} strokeWidth="4.500" /></Pic></ToolIcon></StackButton><Arrow label="填充选项" />
        </StackRow>
        <StackRow $h={50}>
          <StackButton aria-label="清除"><ToolIcon $w={40}><Eraser /></ToolIcon></StackButton><Arrow label="清除选项" />
        </StackRow>
      </Stack>
      <Stack $left={8}>
        <BigButton $w={128}>
          <BigArt>
            <svg width="66" height="76">
              <text x="13" y="33" textAnchor="middle" fontSize="40" fontFamily={UI} fontWeight="500" fill={BLUE}>A</text>
              <text x="13" y="67" textAnchor="middle" fontSize="40" fontFamily={UI} fontWeight="500" fill="#9768b8">Z</text>
              <path d="M33 20H66L53 36V60L46 54V36Z" fill="#7a7a7a" /><path d="M38 23L49 36V54" fill="none" stroke="#e6e6e6" strokeWidth="2" />
            </svg>
          </BigArt>
          <BigLine>排序和筛选</BigLine>
          <BigLine><Tri /></BigLine>
        </BigButton>
      </Stack>
    </Columns>
  </Group>
);

const Formula = () => (
  <FormulaBar>
    <NameBox><input aria-label="名称框" defaultValue="B1" /><Tri w={16} h={8} c="#777" /></NameBox>
    <Dots><Pic w={4} h={22}><path d="M0 0h4v4h-4zM0 9h4v4h-4zM0 18h4v4h-4z" fill="#a8a8a8" /></Pic></Dots>
    <FormulaTools>
      <button aria-label="取消"><Pic w={23} h={22}><path d="M2 2L21 20M20 1L2 21" stroke="#bcbcbc" strokeWidth="3.500" /></Pic></button>
      <button aria-label="输入"><Pic w={26} h={22}><path d="M1 13L8 19L24 2" stroke="#bcbcbc" strokeWidth="4.500" /></Pic></button>
      <button aria-label="插入函数"><Glyph $serif $italic $size={32}>fx</Glyph></button>
    </FormulaTools>
    <FormulaInput aria-label="编辑栏" defaultValue="人数" />
  </FormulaBar>
);

const DATA = [
  ["课程", "人数", "单价"], ["Java", 22100, 1500], ["前端", 14000, 1200], ["UI", 8000, 950],
  ["Python", 4500, 900], ["测试", 2500, 350], ["大数据", 5000, 550], ["新媒体", 2000, 1000],
];
const COLS = "ABCDEFGHIJKLMNOPQRST".split("");
const WIDTHS = [104, 91, 76];
const LINE = "#d4d4d4";
const RULE = "#4a72a8";

const cellLook = (r, c) => {
  const data = r < 8 && c < 3;
  const blue = r < 3 && c > 2;
  const page = COLS[c] === "J" || COLS[c] === "S";
  return {
    $dash: data,
    $dashRight: data && c === 2,
    $page: page,
    $sel: data && c === 1 && r > 0,
    $bottom: data ? "transparent" : blue ? RULE : LINE,
    $right: data || page ? "transparent" : blue || (r === 11 && c === 4) ? RULE : LINE,
  };
};

const Workbook = () => (
  <SheetWrap>
    <Sheet>
      <colgroup>
        <col style={{ width: 52 }} />
        {COLS.map((c, i) => <col key={c} style={{ width: WIDTHS[i] || 136 }} />)}
      </colgroup>
      <thead>
        <tr>
          <ColHead aria-label="全选"><Corner><Pic w={28} h={28}><path d="M28 0V28H0Z" fill="#b4b4b4" /></Pic></Corner></ColHead>
          {COLS.map((c) => <ColHead key={c} $on={c === "B"}>{c}</ColHead>)}
        </tr>
      </thead>
      <tbody>
        {Array.from({ length: 13 }, (_, r) => (
          <tr key={r}>
            <RowHead $on={r < 8}>{r + 1}</RowHead>
            {COLS.map((c, i) => {
              const v = DATA[r]?.[i];
              const num = typeof v === "number";
              return <Cell key={c} {...cellLook(r, i)} $num={num} $latin={num || /^[A-Za-z]/.test(v || "")} $bold={r === 0}>{v}</Cell>;
            })}
          </tr>
        ))}
      </tbody>
    </Sheet>
    <Selection />
  </SheetWrap>
);

const Pointer = ({ from, to }) => {
  const [x1, y1] = from;
  const [x2, y2] = to;
  const len = Math.hypot(x2 - x1, y2 - y1);
  const deg = (Math.atan2(y2 - y1, x2 - x1) * 180) / Math.PI;
  return (
    <g transform={`translate(${x1} ${y1}) rotate(${deg})`}>
      <path d={`M0 0H${len - 18}`} stroke={RED} strokeWidth="6" strokeLinecap="round" />
      <path d={`M${len} 0L${len - 27} -11L${len - 21} 0L${len - 27} 11Z`} fill={RED} />
    </g>
  );
};

export default function App() {
  return (
    <Page>
      <GlobalStyle />
      <TopBar />
      <Ribbon>
        <Clipboard />
        <FontGroup />
        <AlignGroup />
        <NumberGroup />
        <StylesGroup />
        <CellsGroup />
        <EditGroup />
      </Ribbon>
      <Formula />
      <Workbook />
      <Marks width="2528" height="942">
        <rect x="2161" y="310" width="299" height="76" rx="2" fill="none" stroke={RED} strokeWidth="8" />
        <Pointer from={[287, 827]} to={[233, 765]} />
        <Pointer from={[1592, 426]} to={[1780, 282]} />
        <Pointer from={[2107, 426]} to={[2060, 378]} />
        <Pointer from={[2424, 464]} to={[2344, 400]} />
      </Marks>
      <Note $x={298} $y={820}>1.</Note>
      <Note $x={328} $y={820}>选择数据区域</Note>
      <Note $x={1556} $y={438}>2. 点击条件格式</Note>
      <Note $x={2100} $y={428}>3. 选择突出显示</Note>
      <Note $x={2418} $y={484}>3</Note>
      <Note $x={2458} $y={472}>{"选择\n突出\n显示\n条件"}</Note>
      <Watermark>@稀土掘金技术社区</Watermark>
    </Page>
  );
}
